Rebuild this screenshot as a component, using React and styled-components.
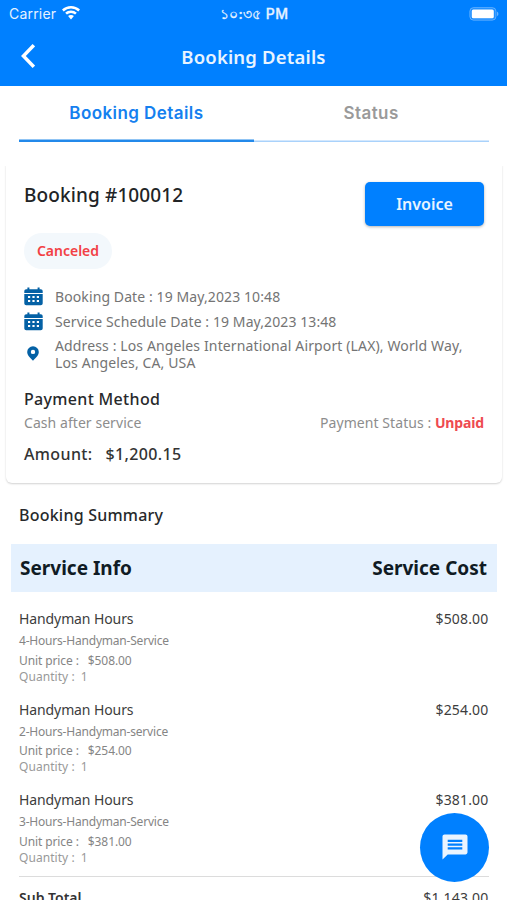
import React, {useState} from 'react';
import styled, {createGlobalStyle} from 'styled-components'

const GlobalStyle = createGlobalStyle`
  * {
    box-sizing: border-box;
  }
  body {
    margin: 0;
    background: #fff;
    font-family: "Noto Sans", "Open Sans", sans-serif;
  }
`

const services = [
    {id: 1, name: 'Handyman Hours', variant: '4-Hours-Handyman-Service', price: '$508.00', quantity: 1},
    {id: 2, name: 'Handyman Hours', variant: '2-Hours-Handyman-service', price: '$254.00', quantity: 1},
    {id: 3, name: 'Handyman Hours', variant: '3-Hours-Handyman-Service', price: '$381.00', quantity: 1},
]

const tabs = ['Booking Details', 'Status'];

const WifiIcon = () => (
    <svg width="18" height="14" viewBox="0 0 18 14" fill="#fff">
        <path d="M9 0C5.600 0 2.400 1.300 0 3.600l1.700 1.800a10.500 10.500 0 0 1 14.600 0L18 3.600C15.600 1.300 12.400 0 9 0z" />
        <path d="M9 4.500c-2.200 0-4.200.8-5.800 2.300l1.700 1.700a6 6 0 0 1 8.200 0l1.700-1.700A8.500 8.500 0 0 0 9 4.500z" />
        <path d="M9 9c-1.100 0-2.100.4-2.900 1.100L9 13.400l2.900-3.300A4.300 4.300 0 0 0 9 9z" />
    </svg>
)

const BatteryIcon = () => (
    <svg width="30" height="14" viewBox="0 0 30 14">
        <rect x=".8" y=".6" width="26.200" height="12.600" rx="3.800" fill="#fff" fillOpacity=".12" stroke="#fff" strokeOpacity=".3" />
        <rect x="2.800" y="2.500" width="22" height="8.800" rx="1.600" fill="#fff" />
        <path d="M28 4.700v4.400c.9-.4 1.400-1.200 1.400-2.200S28.900 5.100 28 4.700z" fill="#fff" fillOpacity=".4" />
    </svg>
)

const BackIcon = () => (
    <svg width="14" height="24" viewBox="0 0 14 24" fill="none" stroke="#fff" strokeWidth="3.400">
        <path d="M12.800 1.200 2.400 12l10.400 10.800" />
    </svg>
)

const CalendarIcon = () => (
    <svg width="19" height="19" viewBox="0 0 19 19" fill="#0461a5">
        <path d="M3.400.5h2v1.800h8.200V.5h2v1.800h1.200c1.100 0 1.900.8 1.900 1.900v1.700H.300V4.200c0-1.100.8-1.900 1.900-1.900h1.200z" />
        <path fillRule="evenodd" d="M.3 7h18.400v9.200c0 1.200-.8 2-2 2H2.300c-1.200 0-2-.8-2-2zM4 9v2.100h2.200V9zM8.400 9v2.100h2.200V9zM12.800 9v2.100h2.200V9zM4 13v2.100h2.200V13zM8.400 13v2.100h2.200V13zM12.800 13v2.100h2.200V13z" />
    </svg>
)

const PinIcon = () => (
    <svg width="12" height="15" viewBox="0 0 12 15" fill="#0461a5">
        <path fillRule="evenodd" d="M6 .2A5.800 5.800 0 0 0 .2 6c0 3.600 3.500 6.300 5.800 8.800C8.300 12.300 11.800 9.600 11.800 6A5.800 5.800 0 0 0 6 .2zm0 3.500a2.200 2.200 0 1 1 0 4.400 2.200 2.200 0 0 1 0-4.400z" />
    </svg>
)

const ChatIcon = () => (
    <svg width="26" height="26" viewBox="0 0 26 26">
        <path d="M2.600.5h20.800C24.600.5 25.500 1.400 25.500 2.600v15.700c0 1.200-.9 2.100-2.100 2.100H5.700L.5 25.400V2.600C.5 1.400 1.400.5 2.600.5z" fill="#eaf4ff" />
        <path d="M5.700 6.900h14.600M5.700 10.600h14.600M5.700 14.300h14.600" stroke="#0080ff" strokeWidth="2.300" />
    </svg>
)

const App = () => {
    const [active, setActive] = useState(0);

    return (
        <Screen>
            <GlobalStyle />
            <StatusBar>
                <Carrier>Carrier <WifiIcon /></Carrier>
                <Clock>১০:৩৫ PM</Clock>
                <Battery><BatteryIcon /></Battery>
            </StatusBar>
            <AppBar>
                <BackButton aria-label="Back"><BackIcon /></BackButton>
                <PageTitle>Booking Details</PageTitle>
            </AppBar>

            <Tabs>
                {tabs.map((tab, i) => (
                    <Tab key={tab} $active={active === i} onClick={() => setActive(i)}>{tab}</Tab>
                ))}
            </Tabs>

            <Card>
                <CardTop>
                    <div>
                        <BookingNumber>Booking #100012</BookingNumber>
                        <StateChip>Canceled</StateChip>
                    </div>
                    <InvoiceButton>Invoice</InvoiceButton>
                </CardTop>
                <InfoRow>
                    <CalendarIcon />
                    <InfoText $spacing="0.1px">Booking Date : 19 May,2023 10:48</InfoText>
                </InfoRow>
                <InfoRow>
                    <CalendarIcon />
                    <InfoText $spacing="0.09px">Service Schedule Date : 19 May,2023 13:48</InfoText>
                </InfoRow>
                <AddressRow>
                    <PinIcon />
                    <InfoText $spacing="0.13px">
                        Address : Los Angeles International Airport (LAX), World Way, Los Angeles, CA, USA
                    </InfoText>
                </AddressRow>
                <PaymentTitle>Payment Method</PaymentTitle>
                <PaymentRow>
                    <span>Cash after service</span>
                    <span>Payment Status : <Unpaid>Unpaid</Unpaid></span>
                </PaymentRow>
                <Amount>
                    <span>Amount:</span>
                    <span>$1,200.15</span>
                </Amount>
            </Card>

            <SummaryTitle>Booking Summary</SummaryTitle>
            <SummaryHead>
                <span>Service Info</span>
                <span>Service Cost</span>
            </SummaryHead>
            <ServiceList>
                {services.map((service) => (
                    <Service key={service.id}>
                        <ServiceLine>
                            <span>{service.name}</span>
                            <Cost>{service.price}</Cost>
                        </ServiceLine>
                        <Variant>{service.variant}</Variant>
                        <UnitPrice><span>Unit price :</span><span>{service.price}</span></UnitPrice>
                        <Quantity><span>Quantity :</span><span>{service.quantity}</span></Quantity>
                    </Service>
                ))}
            </ServiceList>
            <SubTotal>
                <strong>Sub Total</strong>
                <Cost>$1,143.00</Cost>
            </SubTotal>

            <ChatButton aria-label="Chat"><ChatIcon /></ChatButton>
        </Screen>
    );
};

export default App;

const Screen = styled.div`
  position: relative;
  width: 507px;
  height: 900px;
  overflow: hidden;
  display: flex;
  flex-direction: column;
  background: #fff;
`

const StatusBar = styled.div`
  flex: none;
  height: 28px;
  padding: 0 8px 0 9px;
  display: grid;
  grid-template-columns: 1fr auto 1fr;
  align-items: center;
  background: #0080ff;
  color: #e6f2ff;
  font: 400 14px/28px Inter, "Noto Sans", sans-serif;
`

const Carrier = styled.div`
  display: flex;
  align-items: center;
  gap: 6px;
  letter-spacing: 0.2px;
  svg {
    margin-top: -2px;
  }
`

const Clock = styled.div`
  font-weight: 500;
  letter-spacing: 0.35px;
  -webkit-text-stroke: 0.3px #e6f2ff;
`

const Battery = styled.div`
  display: flex;
  justify-content: flex-end;
  margin-top: -1px;
`

const AppBar = styled.header`
  flex: none;
  height: 58px;
  padding: 0 21px 2px;
  display: grid;
  grid-template-columns: 40px 1fr 40px;
  align-items: center;
  background: #0080ff;
`

const BackButton = styled.button`
  display: flex;
  padding: 0;
  border: 0;
  background: none;
`

const PageTitle = styled.h1`
  margin: 0;
  text-align: center;
  color: #e8f4ff;
  font-size: 18.500px;
  font-weight: 600;
  letter-spacing: 0.18px;
`

const Tabs = styled.div`
  flex: none;
  height: 55.500px;
  margin: 0 18.500px 0 19px;
  display: flex;
`

const Tab = styled.button`
  flex: 1;
  padding: 0 0 2px;
  border: 0;
  background: none;
  box-shadow: inset 0 ${(props) => (props.$active ? '-2.500px #2389ea' : '-1.500px #a9d2fb')};
  color: ${(props) => (props.$active ? '#1580ef' : '#9a9a9a')};
  font: 600 17px/20px Inter, "Noto Sans", sans-serif;
  letter-spacing: 0.42px;
`

const Card = styled.section`
  flex: none;
  height: 323px;
  margin: 18.500px 5px 0 6px;
  padding: 21.500px 18px 0;
  border-radius: 6px;
  background: #fff;
  box-shadow: 0 1px 2px rgba(0, 0, 0, 0.18);
  clip-path: inset(6px -4px -5px -4px);
`

const CardTop = styled.div`
  display: flex;
  justify-content: space-between;
  align-items: flex-start;
  height: 103px;
`

const BookingNumber = styled.h2`
  margin: 0 0 25px;
  color: #222426;
  font-size: 19px;
  font-weight: 500;
  line-height: 26px;
  letter-spacing: 0.12px;
`

const StateChip = styled.span`
  display: block;
  width: 88px;
  border-radius: 18px;
  background: #f3f8fc;
  color: #f23f45;
  text-align: center;
  font-size: 14px;
  font-weight: 600;
  line-height: 36px;
`

const InvoiceButton = styled.button`
  width: 119px;
  height: 44.500px;
  border: 0;
  border-radius: 5px;
  background: #0080ff;
  box-shadow: 0 1px 3px rgba(0, 0, 0, 0.3);
  color: #e8f4ff;
  font: 600 16px "Noto Sans", sans-serif;
`

const InfoRow = styled.div`
  display: flex;
  align-items: center;
  gap: 12px;
  height: 24.500px;
  color: #747474;
`

const InfoText = styled.span`
  font-size: 14px;
  line-height: 17px;
  letter-spacing: ${(props) => props.$spacing};
`

const AddressRow = styled(InfoRow)`
  gap: 16px;
  height: 34px;
  margin-top: 3px;
  padding-left: 3px;
  svg {
    flex: none;
  }
`

const PaymentTitle = styled.h3`
  margin: 17px 0 0;
  color: #27292b;
  font-size: 16px;
  font-weight: 500;
  line-height: 22px;
  letter-spacing: 0.32px;
`

const PaymentRow = styled.div`
  display: flex;
  justify-content: space-between;
  margin-top: 3.500px;
  color: #8d8d8d;
  font-size: 14px;
  line-height: 20px;
  letter-spacing: 0.06px;
`

const Unpaid = styled.b`
  color: #ee4a50;
  letter-spacing: -0.15px;
`

const Amount = styled.div`
  display: flex;
  gap: 13px;
  margin-top: 9.500px;
  color: #333;
  font-size: 16px;
  font-weight: 500;
  line-height: 22px;
  letter-spacing: 0.36px;
`

const SummaryTitle = styled.h3`
  margin: 21px 19px 18px;
  color: #27292b;
  font-size: 16px;
  font-weight: 500;
  line-height: 22px;
  letter-spacing: 0.22px;
`

const SummaryHead = styled.div`
  flex: none;
  display: flex;
  justify-content: space-between;
  margin: 0 10px 0 11px;
  padding: 0 10px 0 9px;
  background: #e5f1fe;
  color: #101b24;
  font-size: 19px;
  font-weight: 700;
  line-height: 48px;
`

const ServiceList = styled.div`
  flex: none;
  margin: 0 18.500px 0 19px;
  padding-top: 17px;
  border-bottom: 1px solid #dcdcdc;
  color: #858585;
  font-size: 12px;
`

const Service = styled.div`
  height: 90.500px;
  &:last-child {
    height: 86px;
  }
`

const ServiceLine = styled.div`
  display: flex;
  justify-content: space-between;
  color: #3d3d3d;
  font-size: 14px;
  line-height: 20px;
  letter-spacing: -0.1px;
`

const Cost = styled.span`
  color: #3d3d3d;
  font-size: 14px;
  letter-spacing: 0.18px;
`

const Variant = styled.div`
  margin-top: 3px;
  line-height: 18px;
  letter-spacing: -0.2px;
`

const UnitPrice = styled.div`
  display: flex;
  gap: 9px;
  margin-top: 1.500px;
  line-height: 17px;
  letter-spacing: -0.1px;
`

const Quantity = styled(UnitPrice)`
  gap: 6px;
  margin-top: 0;
  color: #999;
  line-height: 16px;
  letter-spacing: 0.05px;
`

const SubTotal = styled.div`
  flex: none;
  display: flex;
  justify-content: space-between;
  margin: 10.500px 18.500px 0 19px;
  color: #333;
  font-size: 14px;
  line-height: 20px;
  strong {
    font-weight: 600;
  }
`

const ChatButton = styled.button`
  position: absolute;
  right: 18px;
  bottom: 18.500px;
  display: flex;
  align-items: center;
  justify-content: center;
  width: 69px;
  height: 69px;
  padding: 0;
  border: 0;
  border-radius: 50%;
  background: #0080ff;
`
